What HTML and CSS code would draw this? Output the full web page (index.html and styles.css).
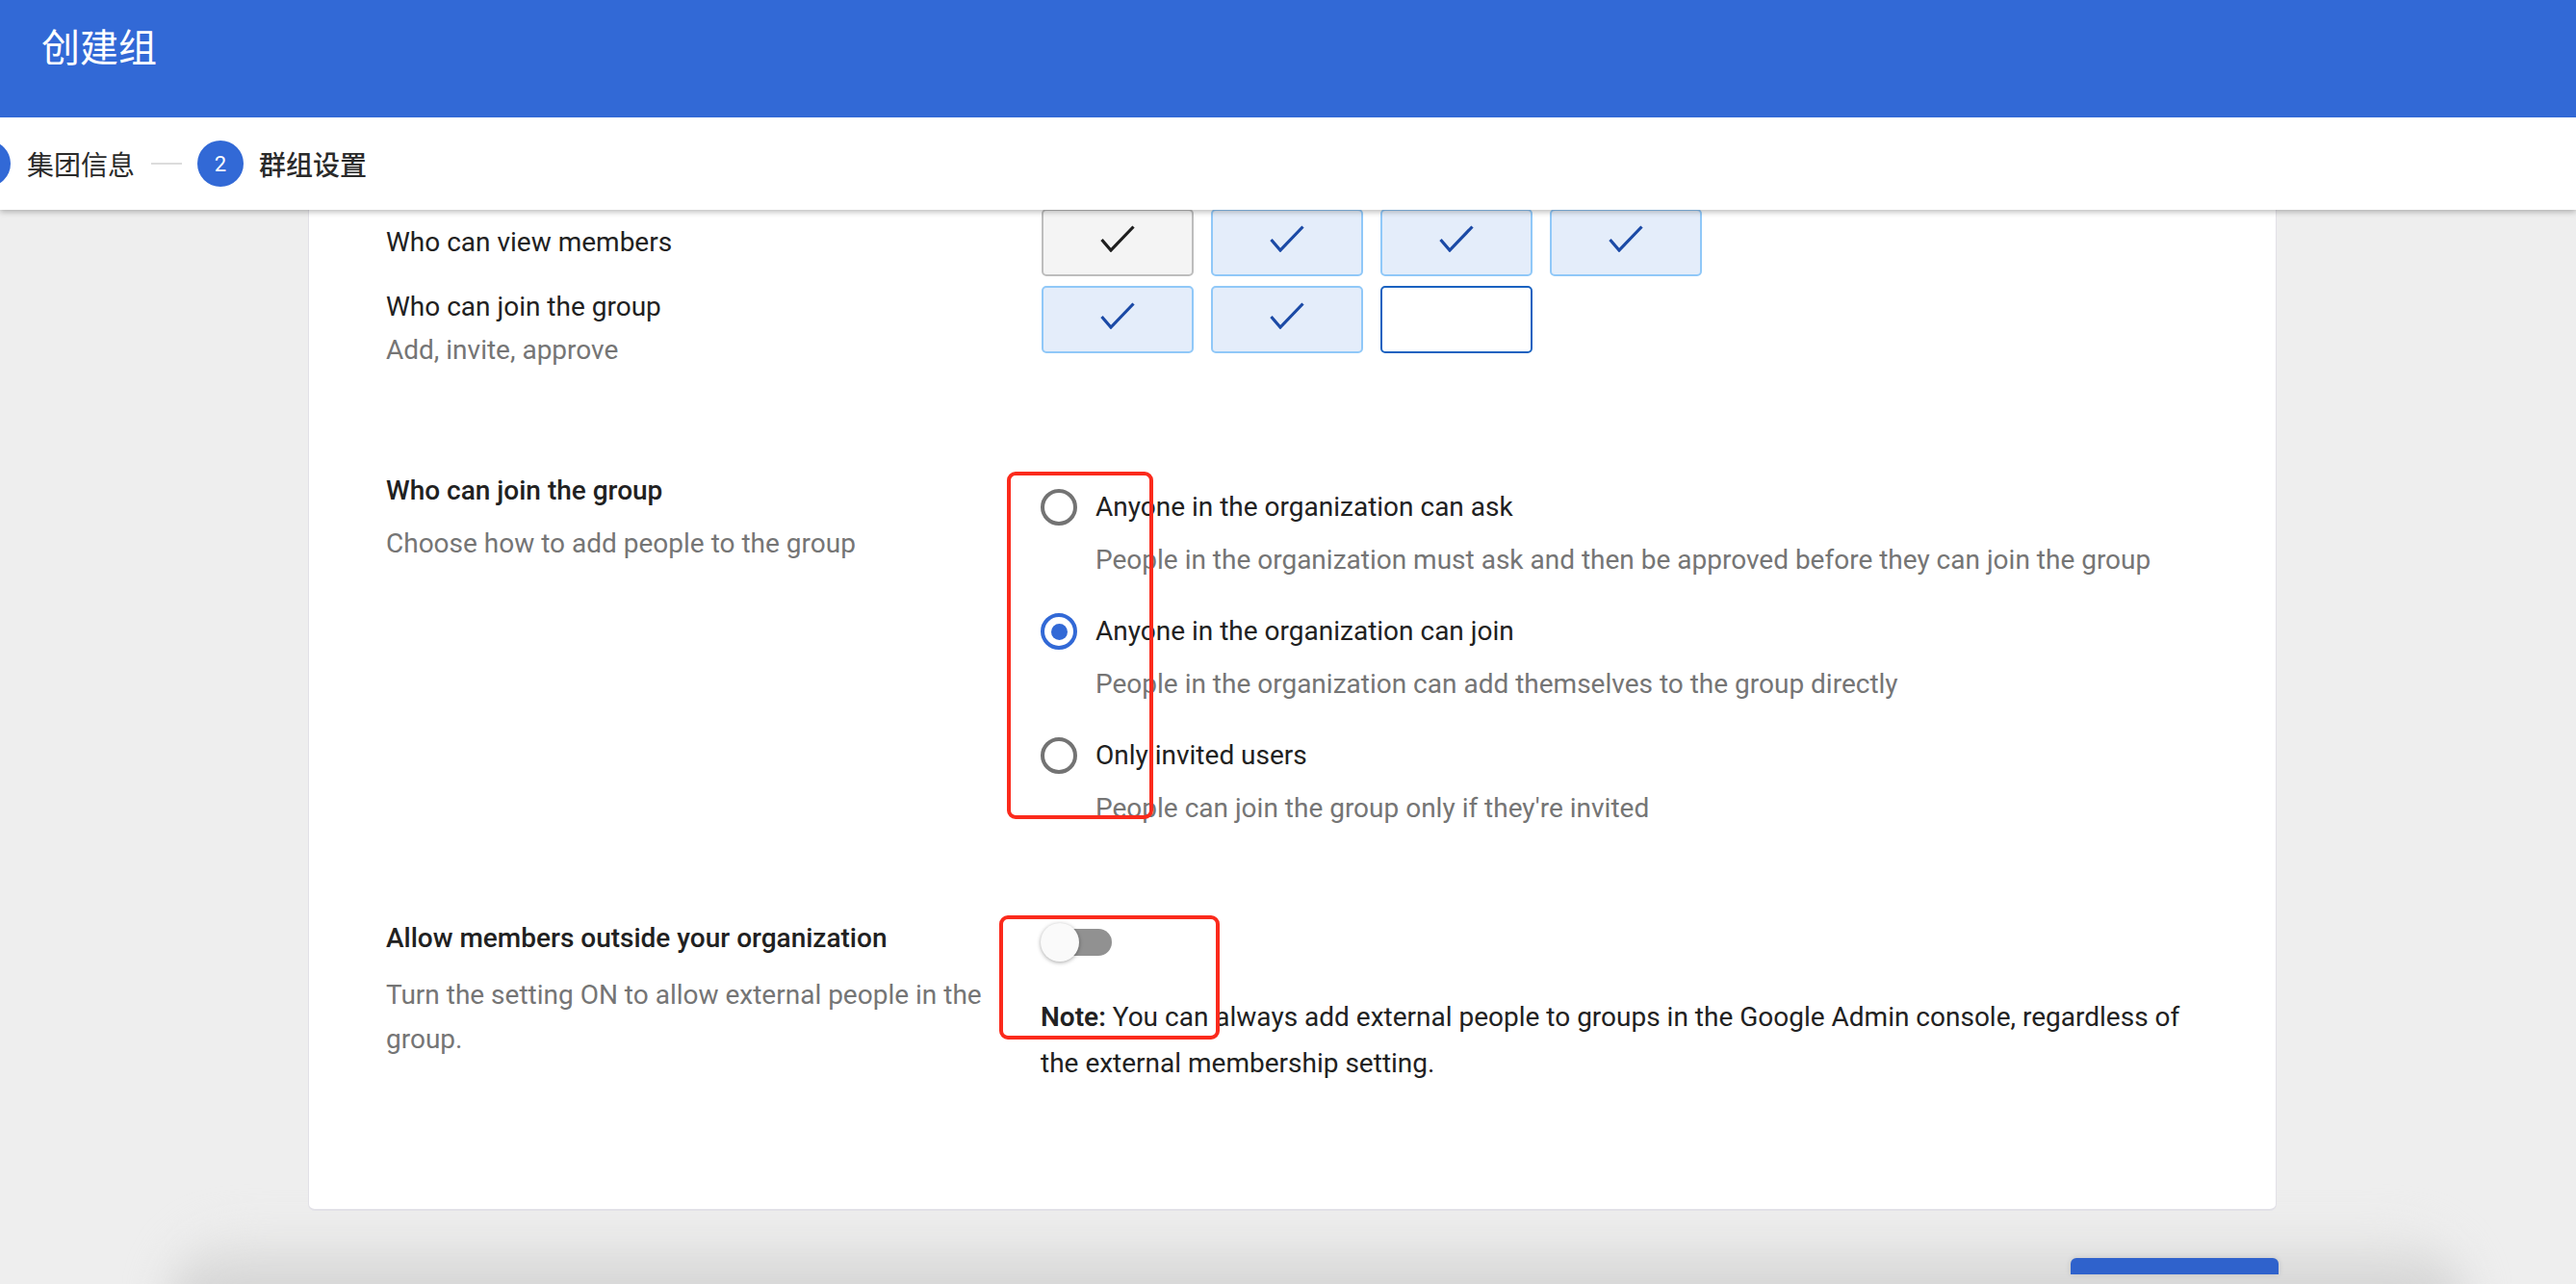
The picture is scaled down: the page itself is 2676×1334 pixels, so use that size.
FILE: index.html
```html
<!DOCTYPE html>
<html lang="zh">
<head>
<meta charset="utf-8">
<title>创建组</title>
<link rel="stylesheet" href="styles.css">
</head>
<body>
<div class="page">
  <header class="topbar">
    <h1 class="title">创建组</h1>
  </header>
  <nav class="stepper">
    <div class="steps">
      <span class="step-dot">1</span>
      <span class="step-label">集团信息</span>
      <span class="step-line"></span>
      <span class="step-dot">2</span>
      <span class="step-label active">群组设置</span>
    </div>
  </nav>
  <main class="main">
    <section class="card">
      <div class="perm-row perm-row-first">
        <div class="left-col">
          <div class="label">Who can view members</div>
        </div>
        <div class="boxes">
          <div class="box box-owner"><svg class="check" viewBox="0 0 36 28" width="36" height="28"><polyline points="1.5,15 11,26 34.5,1.5" fill="none" stroke="#1f1f1f" stroke-width="3.2"/></svg></div>
          <div class="box box-on"><svg class="check" viewBox="0 0 36 28" width="36" height="28"><polyline points="1.5,15 11,26 34.5,1.5" fill="none" stroke="#1b4aa6" stroke-width="3.2"/></svg></div>
          <div class="box box-on"><svg class="check" viewBox="0 0 36 28" width="36" height="28"><polyline points="1.5,15 11,26 34.5,1.5" fill="none" stroke="#1b4aa6" stroke-width="3.2"/></svg></div>
          <div class="box box-on"><svg class="check" viewBox="0 0 36 28" width="36" height="28"><polyline points="1.5,15 11,26 34.5,1.5" fill="none" stroke="#1b4aa6" stroke-width="3.2"/></svg></div>
        </div>
      </div>
      <div class="perm-row perm-row-second">
        <div class="left-col left-col-pad">
          <div class="label">Who can join the group</div>
          <div class="sublabel">Add, invite, approve</div>
        </div>
        <div class="boxes">
          <div class="box box-on"><svg class="check" viewBox="0 0 36 28" width="36" height="28"><polyline points="1.5,15 11,26 34.5,1.5" fill="none" stroke="#1b4aa6" stroke-width="3.2"/></svg></div>
          <div class="box box-on"><svg class="check" viewBox="0 0 36 28" width="36" height="28"><polyline points="1.5,15 11,26 34.5,1.5" fill="none" stroke="#1b4aa6" stroke-width="3.2"/></svg></div>
          <div class="box box-empty"></div>
        </div>
      </div>

      <div class="setting setting-join">
        <div class="left-col">
          <div class="setting-title">Who can join the group</div>
          <div class="setting-desc">Choose how to add people to the group</div>
        </div>
        <div class="right-col right-col-radios">
          <div class="option">
            <div class="option-row"><span class="radio"></span><span class="option-label">Anyone in the organization can ask</span></div>
            <div class="option-desc">People in the organization must ask and then be approved before they can join the group</div>
          </div>
          <div class="option">
            <div class="option-row"><span class="radio radio-on"></span><span class="option-label">Anyone in the organization can join</span></div>
            <div class="option-desc">People in the organization can add themselves to the group directly</div>
          </div>
          <div class="option">
            <div class="option-row"><span class="radio"></span><span class="option-label">Only invited users</span></div>
            <div class="option-desc">People can join the group only if they're invited</div>
          </div>
          <div class="mark mark-radios"></div>
        </div>
      </div>

      <div class="setting setting-external">
        <div class="left-col">
          <div class="setting-title">Allow members outside your organization</div>
          <div class="setting-desc narrow">Turn the setting ON to allow external people in the group.</div>
        </div>
        <div class="right-col">
          <div class="switch"><span class="switch-track"></span><span class="switch-thumb"></span></div>
          <p class="note"><b>Note:</b> You can always add external people to groups in the Google Admin console, regardless of the external membership setting.</p>
          <div class="mark mark-switch"></div>
        </div>
      </div>
    </section>
  </main>
  <footer class="footer">
    <div class="footer-btn"></div>
  </footer>
</div>
</body>
</html>
```

FILE: styles.css
```css
* { box-sizing: border-box; }
html, body { margin: 0; padding: 0; }
body {
  background: #eeeeee;
  font-family: Roboto, "Noto Sans CJK SC", sans-serif;
  color: #212121;
  overflow: hidden;
}
.page {
  width: 2676px;
  height: 1334px;
  overflow: hidden;
  position: relative;
}
.topbar {
  height: 122px;
  background: #3269d6;
  padding: 23px 0 0 43px;
  position: relative;
  z-index: 3;
}
.title {
  margin: 0;
  font-family: "Noto Sans CJK SC", sans-serif;
  font-weight: 400;
  font-size: 40px;
  line-height: 48px;
  color: #ffffff;
}
.stepper {
  height: 96px;
  background: #ffffff;
  position: relative;
  z-index: 2;
  box-shadow: 0 2px 6px rgba(0,0,0,0.28);
  display: flex;
  align-items: center;
}
.steps {
  display: flex;
  align-items: center;
  margin-left: -37px;
}
.step-dot {
  width: 48px;
  height: 48px;
  border-radius: 50%;
  background: #3269d6;
  color: #fff;
  font-size: 22px;
  display: flex;
  align-items: center;
  justify-content: center;
  flex: none;
}
.step-label {
  font-family: "Noto Sans CJK SC", sans-serif;
  font-size: 28px;
  line-height: 40px;
  color: #2a2a2a;
  margin-left: 17px;
}
.step-label.active { margin-left: 16px; font-weight: 500; }
.step-line {
  width: 32px;
  height: 2px;
  background: #dcdcdc;
  margin: 0 16px 0 17px;
}
.main {
  padding: 0 311px 0 320px;
  position: relative;
  z-index: 1;
}
.card {
  margin-top: -2px;
  background: #ffffff;
  border: 1px solid #e2e1e7;
  border-bottom-width: 2px;
  border-radius: 0 0 7px 7px;
  padding: 0 80px 127px 80px;
  position: relative;
}
.perm-row {
  display: flex;
}
.perm-row-first { align-items: center; }
.perm-row-second { align-items: flex-start; margin-top: 10px; }
.left-col {
  width: 680px;
  flex: none;
}
.left-col-pad { padding-top: 5px; }
.label {
  font-size: 28px;
  line-height: 34px;
  color: #212121;
}
.sublabel {
  font-size: 28px;
  line-height: 34px;
  color: #757575;
  margin-top: 11px;
}
.boxes {
  display: grid;
  grid-template-columns: repeat(4, 158px);
  column-gap: 18px;
  margin-left: 1px;
}
.box {
  height: 70px;
  border-radius: 5px;
  border: 2px solid #90c8f8;
  background: #e4edfa;
  display: flex;
  align-items: center;
  justify-content: center;
  padding-bottom: 8px;
}
.box-owner {
  background: #f4f4f4;
  border-color: #bdbdbd;
}
.box-empty {
  background: #ffffff;
  border-color: #1a62c0;
}
.setting {
  display: flex;
  align-items: flex-start;
}
.setting-join { margin-top: 112px; }
.setting-external { margin-top: 101px; }
.setting-title {
  font-size: 28px;
  line-height: 34px;
  font-weight: 500;
  color: #212121;
}
.setting-desc {
  font-size: 28px;
  line-height: 46px;
  color: #757575;
  margin-top: 15px;
}
.setting-desc.narrow { width: 640px; }
.setting-external .setting-desc { margin-top: 19px; }
.right-col {
  flex: 1;
  position: relative;
}
.right-col-radios { padding-top: 14px; }
.option + .option { margin-top: 37px; }
.option-row {
  display: flex;
  align-items: center;
  height: 40px;
}
.radio {
  width: 38px;
  height: 38px;
  border-radius: 50%;
  border: 4px solid #737373;
  flex: none;
  display: flex;
  align-items: center;
  justify-content: center;
}
.radio-on { border-color: #3269d6; }
.radio-on::after {
  content: "";
  width: 17px;
  height: 17px;
  border-radius: 50%;
  background: #3269d6;
}
.option-label {
  margin-left: 19px;
  font-size: 28px;
  line-height: 34px;
  color: #212121;
}
.option-desc {
  margin-top: 18px;
  padding-left: 57px;
  font-size: 28px;
  line-height: 34px;
  color: #757575;
}
.switch {
  position: relative;
  width: 76px;
  height: 40px;
  margin-top: 1px;
}
.switch-track {
  position: absolute;
  left: 8px;
  top: 6px;
  width: 66px;
  height: 28px;
  border-radius: 14px;
  background: #919191;
}
.switch-thumb {
  position: absolute;
  left: 0;
  top: 0;
  width: 40px;
  height: 40px;
  border-radius: 50%;
  background: #fafafa;
  box-shadow: 0 1px 4px rgba(0,0,0,0.35);
}
.note {
  margin: 34px 0 0 0;
  font-size: 28px;
  line-height: 48px;
  color: #212121;
}
.note b { font-weight: 600; }
.mark {
  position: absolute;
  border: 4px solid #fb2a1c;
  border-radius: 9px;
  pointer-events: none;
}
.mark-radios {
  left: -35px;
  top: -3px;
  width: 152px;
  height: 361px;
}
.mark-switch {
  left: -43px;
  top: -7px;
  width: 229px;
  height: 129px;
}
.footer {
  position: relative;
  height: 80px;
  margin-top: 14px;
  display: flex;
  justify-content: flex-end;
  padding-right: 309px;
}
.footer::before {
  content: "";
  position: absolute;
  left: 175px;
  right: 115px;
  top: 10px;
  bottom: -80px;
  border-radius: 90px;
  background: linear-gradient(#ebebea, #d5d5d5 50px);
  filter: blur(22px);
}
.footer-btn {
  position: relative;
  width: 216px;
  height: 17px;
  margin-top: 35px;
  border-radius: 6px 6px 0 0;
  background: #2f62cc;
  box-shadow: 0 0 6px rgba(0,0,0,0.12);
}
```
